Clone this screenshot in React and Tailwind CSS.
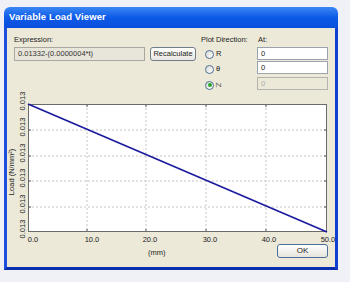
import React from "react";

const font = { fontFamily: '"Liberation Sans", Arial, sans-serif' };

function Radio({ checked }) {
    return (
        <span className="relative inline-flex h-[9px] w-[9px] items-center justify-center rounded-full border border-[#4a6f96] bg-gradient-to-br from-[#dcdad0] to-white">
            {checked && <span className="h-[4px] w-[4px] rounded-full bg-[#2aa62a]" />}
        </span>
    );
}

function Chart() {
    const vx = [80, 139, 199, 259];
    const hy = [40, 66, 91, 117];
    const yTicks = [11, 37, 63, 88, 114, 139];
    const xLabels = [
        [26, "0.0"],
        [85, "10.0"],
        [143, "20.0"],
        [203, "30.0"],
        [262, "40.0"],
        [321, "50.0"],
    ];
    return (
        <svg width="328" height="154" className="block overflow-visible" style={font}>
            <rect x="21" y="14" width="299" height="128" fill="#ffffff" />
            {vx.map((x) => (
                <line key={x} x1={x} y1="14" x2={x} y2="142" stroke="#c4c4c4" strokeDasharray="2 2" />
            ))}
            {hy.map((y) => (
                <line key={y} x1="21" y1={y} x2="320" y2={y} stroke="#c4c4c4" strokeDasharray="2 2" />
            ))}
            {vx.map((x) => (
                <g key={"t" + x}>
                    <line x1={x} y1="14" x2={x} y2="17" stroke="#555" />
                    <line x1={x} y1="139" x2={x} y2="142" stroke="#555" />
                </g>
            ))}
            {hy.map((y) => (
                <g key={"h" + y}>
                    <line x1="21" y1={y} x2="24" y2={y} stroke="#555" />
                    <line x1="317" y1={y} x2="320" y2={y} stroke="#555" />
                </g>
            ))}
            <rect x="21.5" y="14.5" width="298" height="127" fill="none" stroke="#6a6a6a" />
            <line x1="21" y1="14" x2="320" y2="142" stroke="#1c1ca0" strokeWidth="1.8" />
            {yTicks.map((y, i) => (
                <text
                    key={i}
                    x="0"
                    y="0"
                    fontSize="7.5"
                    fill="#222"
                    textAnchor="middle"
                    transform={`translate(17.5 ${y}) rotate(-90)`}
                >
                    0.013
                </text>
            ))}
            <text x="0" y="0" fontSize="7.5" fill="#222" textAnchor="middle" transform="translate(7 82) rotate(-90)">
                Load (N/mm²)
            </text>
            {xLabels.map(([x, t]) => (
                <text key={t} x={x} y="152" fontSize="7.5" fill="#222" textAnchor="middle">
                    {t}
                </text>
            ))}
        </svg>
    );
}

export default function App() {
    return (
        <div className="min-h-screen w-[350px] h-[282px] bg-[#eff1f7] pl-[4px] pt-[7px]" style={font}>
            <div className="w-[334px] h-[263px] flex flex-col">
                {/* Title bar */}
                <div className="h-[21px] rounded-t-[6px] bg-gradient-to-b from-[#3a86f4] via-[#0d5ae8] to-[#0a4fdb] flex items-center pl-[5px]">
                    <span className="text-white font-bold text-[9.5px] tracking-[0.1px]">Variable Load Viewer</span>
                </div>

                {/* Body */}
                <div className="flex-1 flex flex-col bg-[#ece9d8] border-l-[3px] border-r-[3px] border-b-[3px] border-l-[#1b4fdc] border-r-[#0e3fcf] border-b-[#0a2fae] text-[#222] text-[7.5px] leading-none">
                    {/* Controls */}
                    <div className="h-[62px] flex pl-[7px] pt-[8px]">
                        <div className="w-[131px] flex flex-col">
                            <div className="h-[11px]">Expression:</div>
                            <div className="h-[14px] border border-[#a8a8a0] bg-[#e8e5da] flex items-center pl-[3px] text-[#333]">
                                0.01332-(0.0000004*t)
                            </div>
                        </div>
                        <div className="ml-[5px] w-[46px] pt-[11px]">
                            <button className="w-[46px] h-[14px] rounded-[3px] border border-[#6f7c8c] bg-gradient-to-b from-white to-[#e9e7df] text-[7.5px] text-[#222] leading-none flex items-center justify-center">
                                Recalculate
                            </button>
                        </div>
                        <div className="ml-[5px] w-[56px] flex flex-col">
                            <div className="h-[11px]">Plot Direction:</div>
                            <div className="h-[14px] flex items-center pl-[4px] gap-[2px]">
                                <Radio />
                                <span>R</span>
                            </div>
                            <div className="h-[14px] flex items-center pl-[4px] gap-[2px] pt-[2px]">
                                <Radio />
                                <span>θ</span>
                            </div>
                            <div className="mt-[5px] h-[10px] flex items-center pl-[4px] gap-[2px]">
                                <Radio checked />
                                <span className="inline-block rotate-90 text-[8px] text-[#555]">Z</span>
                            </div>
                        </div>
                        <div className="w-[71px] flex flex-col">
                            <div className="h-[11px] pl-[1px]">At:</div>
                            <div className="h-[13px] border border-[#9aa3ae] bg-white flex items-center pl-[3px] text-[#222]">0</div>
                            <div className="mt-[1px] h-[13px] border border-[#9aa3ae] bg-white flex items-center pl-[3px] text-[#222]">0</div>
                            <div className="mt-[3px] h-[13px] border border-[#b4b4ac] bg-[#ece9d8] flex items-center pl-[3px] text-[#aaa]">0</div>
                        </div>
                    </div>

                    {/* Chart */}
                    <Chart />

                    {/* Bottom row */}
                    <div className="flex-1 flex items-start">
                        <span className="ml-[141px] mt-[5px]">(mm)</span>
                        <button className="ml-auto mr-[7px] w-[51px] h-[14px] rounded-[3px] border border-[#4a6f9c] bg-gradient-to-b from-white to-[#e6e4dc] text-[8px] text-[#222] leading-none flex items-center justify-center">
                            OK
                        </button>
                    </div>
                </div>
            </div>
        </div>
    );
}
